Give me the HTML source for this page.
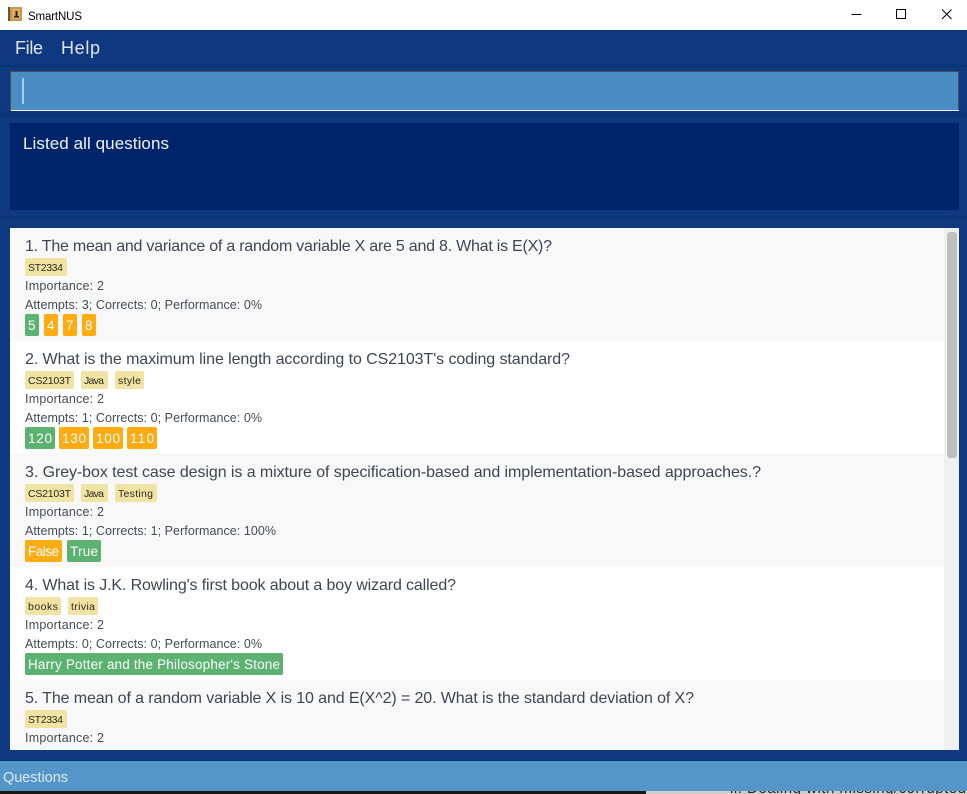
<!DOCTYPE html>
<html><head><meta charset="utf-8"><style>
html,body{margin:0;padding:0;width:967px;height:794px;overflow:hidden;background:#0e387f}
svg{display:block}
text{font-family:"Liberation Sans",sans-serif}
.q{font-size:16px;fill:#3d4652}
.s{font-size:12.5px;fill:#444c56}
.t{font-size:10.5px;fill:#2b2a1c}
.a{font-size:13.5px;fill:#fff}
.y{fill:#f0e3a4}.g{fill:#5cb270}.o{fill:#ffab12}
</style></head><body>
<svg width="967" height="794" viewBox="0 0 967 794" xmlns="http://www.w3.org/2000/svg">
<rect width="967" height="794" fill="#0e387f"/>
<!-- title bar -->
<rect width="967" height="30" fill="#fff"/>
<rect x="8" y="7" width="14" height="14" fill="#c89850"/>
<rect x="8" y="7" width="2" height="14" fill="#6e5130"/>
<rect x="12" y="9" width="8" height="10" fill="#dcae66"/>
<path d="M14 16h5v1.500h-5zM15.500 11h2v5h-2z" fill="#2f2413"/>
<text x="28" y="20" font-size="11.500" fill="#000" textLength="54" lengthAdjust="spacing">SmartNUS</text>
<path d="M851.500 14.500h10" stroke="#000" stroke-width="1" fill="none"/>
<rect x="896.500" y="9.500" width="9" height="9" fill="none" stroke="#000" stroke-width="1"/>
<path d="M942 9.500l9.500 9.500M951.500 9.500l-9.500 9.500" stroke="#000" stroke-width="1" fill="none"/>
<!-- menu -->
<text x="15" y="54" font-size="18" fill="#dfe6f0" textLength="28" lengthAdjust="spacing">File</text>
<text x="61" y="54" font-size="18" fill="#dfe6f0" textLength="39" lengthAdjust="spacing">Help</text>
<rect y="65" width="967" height="1.500" fill="#0b3272"/>
<!-- input -->
<rect x="10" y="71" width="949" height="40" fill="#4a8cc4"/>
<rect x="10" y="71" width="949" height="1" fill="#4a4f55"/>
<rect x="10" y="71" width="1" height="40" fill="#4a4f55"/>
<rect x="958" y="71" width="1" height="40" fill="#4a4f55"/>
<rect x="11" y="110" width="948" height="1" fill="#fff"/>
<rect x="22" y="78" width="2" height="26" fill="#a9cbe6"/>
<!-- result -->
<rect y="111" width="967" height="5" fill="#0d3579"/>
<rect y="116" width="967" height="1" fill="#0b3272"/>
<rect x="10" y="123" width="949" height="87" fill="#00246b"/>
<text x="23" y="149" font-size="17" fill="#eef3fa" textLength="146" lengthAdjust="spacing">Listed all questions</text>
<rect y="216" width="967" height="2" fill="#0b3272"/>
<!-- list -->
<rect x="10" y="228" width="934" height="113" fill="#f8f8f8"/>
<rect x="10" y="341" width="934" height="113" fill="#fff"/>
<rect x="10" y="454" width="934" height="113" fill="#f8f8f8"/>
<rect x="10" y="567" width="934" height="113" fill="#fff"/>
<rect x="10" y="680" width="934" height="70" fill="#f8f8f8"/>
<rect x="944" y="228" width="15" height="522" fill="#f0f0f0"/>
<rect x="947" y="232" width="10" height="226" rx="3" fill="#bfbfbf"/>
<!-- q1 -->
<text class="q" x="25" y="251" textLength="527" lengthAdjust="spacing">1. The mean and variance of a random variable X are 5 and 8. What is E(X)?</text>
<rect class="y" x="25" y="258" width="42" height="18" rx="2"/><text class="t" x="28" y="271" textLength="35" lengthAdjust="spacing">ST2334</text>
<text class="s" x="25" y="290" textLength="79" lengthAdjust="spacing">Importance: 2</text>
<text class="s" x="25" y="309" textLength="237" lengthAdjust="spacing">Attempts: 3; Corrects: 0; Performance: 0%</text>
<rect class="g" x="25" y="314" width="14" height="22" rx="2"/><text class="a" x="28" y="330">5</text>
<rect class="o" x="44" y="314" width="14" height="22" rx="2"/><text class="a" x="47" y="330">4</text>
<rect class="o" x="63" y="314" width="14" height="22" rx="2"/><text class="a" x="66" y="330">7</text>
<rect class="o" x="82" y="314" width="14" height="22" rx="2"/><text class="a" x="85" y="330">8</text>
<!-- q2 -->
<text class="q" x="25" y="364" textLength="545" lengthAdjust="spacing">2. What is the maximum line length according to CS2103T's coding standard?</text>
<rect class="y" x="25" y="371" width="49" height="18" rx="2"/><text class="t" x="28" y="384" textLength="43" lengthAdjust="spacing">CS2103T</text>
<rect class="y" x="81" y="371" width="27" height="18" rx="2"/><text class="t" x="84" y="384" textLength="20" lengthAdjust="spacing">Java</text>
<rect class="y" x="115" y="371" width="29" height="18" rx="2"/><text class="t" x="118" y="384" textLength="23" lengthAdjust="spacing">style</text>
<text class="s" x="25" y="403" textLength="79" lengthAdjust="spacing">Importance: 2</text>
<text class="s" x="25" y="422" textLength="237" lengthAdjust="spacing">Attempts: 1; Corrects: 0; Performance: 0%</text>
<rect class="g" x="25" y="427" width="30" height="22" rx="2"/><text class="a" x="28" y="443" textLength="24">120</text>
<rect class="o" x="59" y="427" width="30" height="22" rx="2"/><text class="a" x="62" y="443" textLength="24">130</text>
<rect class="o" x="93" y="427" width="30" height="22" rx="2"/><text class="a" x="96" y="443" textLength="24">100</text>
<rect class="o" x="127" y="427" width="30" height="22" rx="2"/><text class="a" x="130" y="443" textLength="24">110</text>
<!-- q3 -->
<text class="q" x="25" y="477" textLength="736" lengthAdjust="spacing">3. Grey-box test case design is a mixture of specification-based and implementation-based approaches.?</text>
<rect class="y" x="25" y="484" width="49" height="18" rx="2"/><text class="t" x="28" y="497" textLength="43" lengthAdjust="spacing">CS2103T</text>
<rect class="y" x="81" y="484" width="27" height="18" rx="2"/><text class="t" x="84" y="497" textLength="20" lengthAdjust="spacing">Java</text>
<rect class="y" x="115" y="484" width="42" height="18" rx="2"/><text class="t" x="118" y="497" textLength="35" lengthAdjust="spacing">Testing</text>
<text class="s" x="25" y="516" textLength="79" lengthAdjust="spacing">Importance: 2</text>
<text class="s" x="25" y="535" textLength="251" lengthAdjust="spacing">Attempts: 1; Corrects: 1; Performance: 100%</text>
<rect class="o" x="25" y="540" width="37" height="22" rx="2"/><text class="a" x="28" y="556" textLength="31" lengthAdjust="spacing">False</text>
<rect class="g" x="67" y="540" width="34" height="22" rx="2"/><text class="a" x="70" y="556" textLength="28" lengthAdjust="spacing">True</text>
<!-- q4 -->
<text class="q" x="25" y="590" textLength="431" lengthAdjust="spacing">4. What is J.K. Rowling's first book about a boy wizard called?</text>
<rect class="y" x="25" y="597" width="36" height="18" rx="2"/><text class="t" x="28" y="610" textLength="30" lengthAdjust="spacing">books</text>
<rect class="y" x="68" y="597" width="30" height="18" rx="2"/><text class="t" x="71" y="610" textLength="24" lengthAdjust="spacing">trivia</text>
<text class="s" x="25" y="629" textLength="79" lengthAdjust="spacing">Importance: 2</text>
<text class="s" x="25" y="648" textLength="237" lengthAdjust="spacing">Attempts: 0; Corrects: 0; Performance: 0%</text>
<rect class="g" x="25" y="653" width="258" height="22" rx="2"/><text class="a" x="28" y="669" textLength="252" lengthAdjust="spacing">Harry Potter and the Philosopher's Stone</text>
<!-- q5 -->
<text class="q" x="25" y="703" textLength="669" lengthAdjust="spacing">5. The mean of a random variable X is 10 and E(X^2) = 20. What is the standard deviation of X?</text>
<rect class="y" x="25" y="710" width="42" height="18" rx="2"/><text class="t" x="28" y="723" textLength="35" lengthAdjust="spacing">ST2334</text>
<text class="s" x="25" y="742" textLength="79" lengthAdjust="spacing">Importance: 2</text>
<!-- status -->
<rect y="760" width="967" height="1" fill="#0b3272"/>
<rect y="761" width="967" height="30" fill="#5596c9"/>
<text x="3" y="782" font-size="14.500" fill="#dbe8f4" textLength="65" lengthAdjust="spacing">Questions</text>
<!-- background strip below window -->
<svg x="0" y="791" width="967" height="3" viewBox="0 791 967 3">
<rect x="0" y="791" width="646" height="3" fill="#1a1810"/>
<rect x="646" y="791" width="321" height="3" fill="#cfcdc8"/>
<text x="730" y="793" font-size="15" fill="#222" textLength="236" lengthAdjust="spacing">ll. Dealing with missing/corrupted</text>
</svg>
</svg>
</body></html>
